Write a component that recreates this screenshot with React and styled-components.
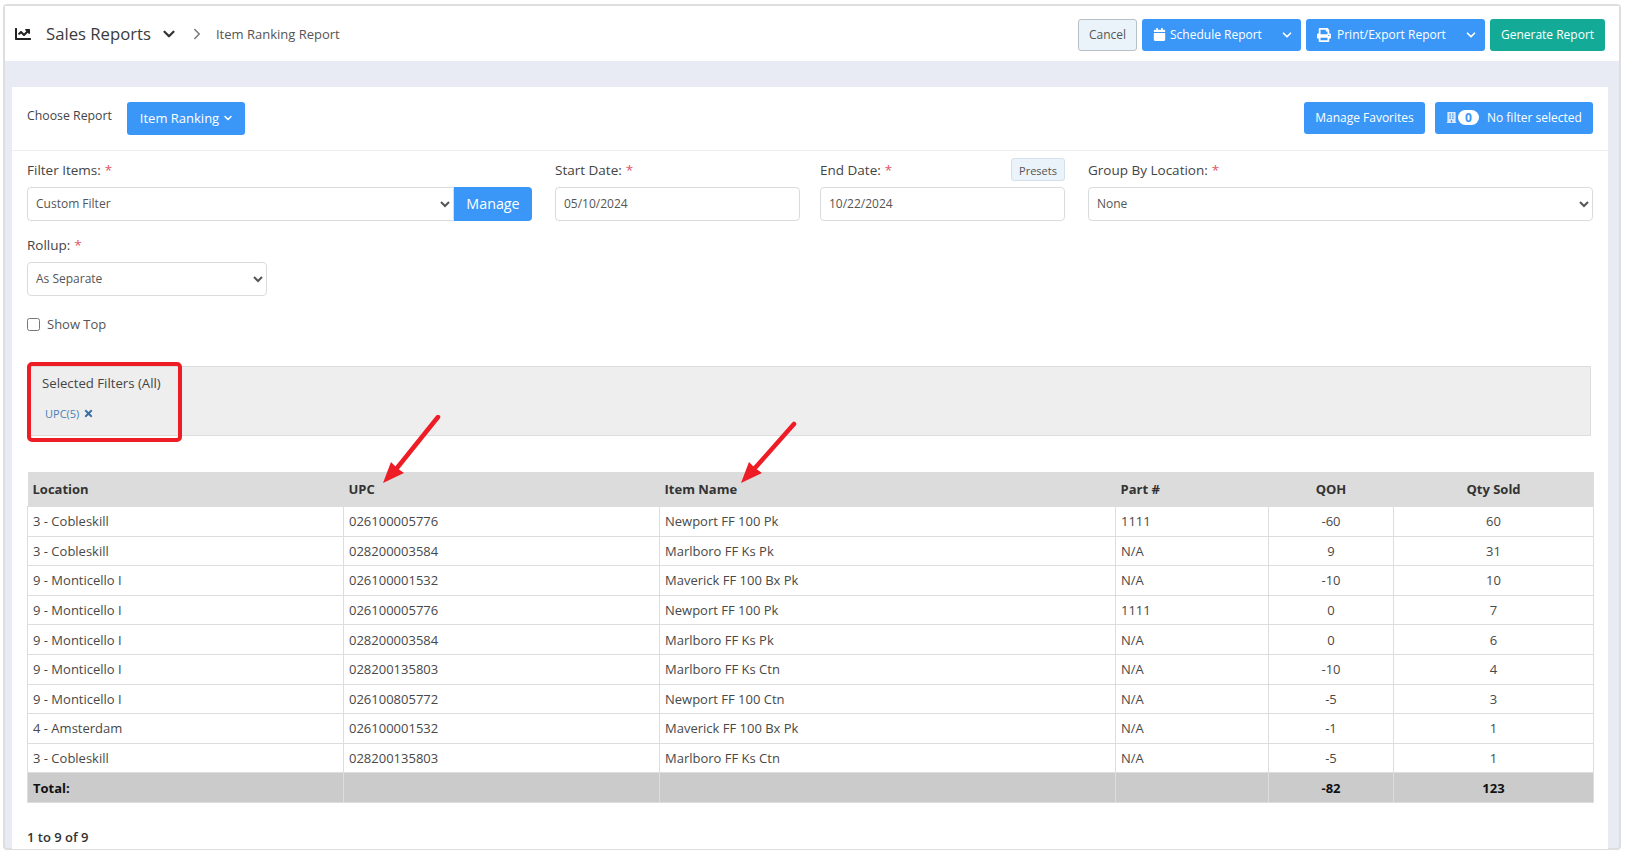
import React from 'react';
import styled, { createGlobalStyle } from 'styled-components';
import { FaBuilding, FaCalendar, FaChartLine, FaPrint, FaTimes } from 'react-icons/fa';
import { FiChevronDown, FiChevronRight } from 'react-icons/fi';

const rows = [
  ['3 - Cobleskill', '026100005776', 'Newport FF 100 Pk', '1111', '-60', '60'],
  ['3 - Cobleskill', '028200003584', 'Marlboro FF Ks Pk', 'N/A', '9', '31'],
  ['9 - Monticello I', '026100001532', 'Maverick FF 100 Bx Pk', 'N/A', '-10', '10'],
  ['9 - Monticello I', '026100005776', 'Newport FF 100 Pk', '1111', '0', '7'],
  ['9 - Monticello I', '028200003584', 'Marlboro FF Ks Pk', 'N/A', '0', '6'],
  ['9 - Monticello I', '028200135803', 'Marlboro FF Ks Ctn', 'N/A', '-10', '4'],
  ['9 - Monticello I', '026100805772', 'Newport FF 100 Ctn', 'N/A', '-5', '3'],
  ['4 - Amsterdam', '026100001532', 'Maverick FF 100 Bx Pk', 'N/A', '-1', '1'],
  ['3 - Cobleskill', '028200135803', 'Marlboro FF Ks Ctn', 'N/A', '-5', '1'],
];

const GlobalStyle = createGlobalStyle`
  html, body {
    margin: 0;
    background: #fff;
    font-family: "Open Sans", "Noto Sans", sans-serif;
    font-size: 13px;
    color: #444;
  }
`;

const Frame = styled.div`
  box-sizing: border-box;
  width: 1618px;
  height: 846px;
  margin: 4px 0 0 3px;
  border: 2px solid #dedede;
  border-radius: 4px;
  background: #e8ebf3;
`;

const Header = styled.header`
  height: 55px;
  display: flex;
  align-items: center;
  background: #fff;
  padding: 0 14px 0 10px;
`;

const Title = styled.h1`
  display: flex;
  align-items: center;
  margin: 0;
  font-size: 16.7px;
  font-weight: 400;
  color: #3b3b3b;
  svg { flex: none; }
`;

const TitleText = styled.span`
  margin: 0 9px 0 15px;
`;

const Crumb = styled.span`
  margin-left: 10px;
  font-size: 13px;
  color: #555;
`;

const Button = styled.button`
  box-sizing: border-box;
  display: inline-flex;
  align-items: center;
  justify-content: center;
  height: ${p => p.$h || 32}px;
  width: ${p => (p.$w ? `${p.$w}px` : 'auto')};
  padding: 0 0 2px;
  border: 0;
  border-radius: 3px;
  background: #3a97f8;
  color: #fff;
  font: 400 12px "Open Sans", "Noto Sans", sans-serif;
  svg { flex: none; }
`;

const Actions = styled.div`
  margin: 2px 0 0 auto;
  display: flex;
  gap: 5px;
  ${Button} { padding-bottom: 0; }
`;

const IconButton = styled(Button)`
  justify-content: flex-start;
  padding-left: 11px;
`;

const ReportButton = styled(Button)`
  padding-left: 2px;
  font-size: 13px;
`;

const CancelButton = styled(Button)`
  background: #ebf3fa;
  border: 1px solid #b9c0c7;
  color: #555;
`;

const TealButton = styled(Button)`
  background: #13ab98;
`;

const ButtonLabel = styled.span`
  margin: 0 18px 0 ${p => p.$left}px;
`;

const Card = styled.main`
  box-sizing: border-box;
  width: 1596px;
  height: 762px;
  margin: 26px 0 0 7px;
  padding-top: 15px;
  background: #fff;
`;

const ReportBar = styled.div`
  display: flex;
  align-items: flex-start;
  height: 48px;
  padding: 0 15px;
  border-bottom: 1px solid #eee;
`;

const BarLabel = styled.span`
  width: 85px;
  margin: 5px 15px 0 0;
  font-size: 12.3px;
  font-weight: 500;
  color: #444;
  white-space: nowrap;
`;

const BarRight = styled.div`
  margin-left: auto;
  display: flex;
  gap: 10px;
`;

const Badge = styled.span`
  display: inline-block;
  width: 21px;
  height: 15px;
  line-height: 15px;
  margin: 0 8px 0 1px;
  border-radius: 8px;
  background: #fff;
  color: #3a97f8;
  font-size: 12px;
  font-weight: 700;
  text-align: center;
`;

const FormRow = styled.div`
  display: flex;
  padding: 0 15px;
  margin-top: ${p => p.$top}px;
`;

const Field = styled.div`
  position: relative;
  width: ${p => p.$w}px;
  margin-right: ${p => p.$mr || 0}px;
`;

const Label = styled.label`
  display: block;
  height: 20px;
  line-height: 20px;
  margin-bottom: 7px;
  font-size: 13.5px;
  font-weight: 500;
  color: #444;
`;

const Required = styled.span`
  color: #df5468;
  margin-left: 4px;
`;

const controlStyle = `
  box-sizing: border-box;
  width: 100%;
  height: 34px;
  border: 1px solid #d9dcdf;
  border-radius: 4px;
  background-color: #fff;
  color: #555;
  font: 400 12px "Open Sans", "Noto Sans", sans-serif;
  outline: none;
`;

const Select = styled.select`
  ${controlStyle}
  padding: 0 4px 1px;
`;

const Input = styled.input`
  ${controlStyle}
  padding: 0 8px 2px;
`;

const InputGroup = styled.div`
  display: flex;
  ${Select} { flex: 1; border-radius: 4px 0 0 4px; }
`;

const ManageButton = styled(Button)`
  width: 78px;
  height: 34px;
  border-radius: 0 4px 4px 0;
  font-size: 14.3px;
`;

const PresetsButton = styled(CancelButton)`
  position: absolute;
  top: -2px;
  right: 0;
  width: 54px;
  height: 23px;
  padding: 1px 0 0;
  font-size: 11px;
  border-color: #d5e0ea;
`;

const CheckRow = styled.label`
  display: flex;
  align-items: center;
  gap: 7px;
  margin: 19px 0 0 15px;
  height: 18px;
  color: #555;
`;

const Check = styled.input`
  margin: 0;
  width: 13px;
  height: 13px;
`;

const FilterPanel = styled.section`
  position: relative;
  box-sizing: border-box;
  width: 1564px;
  height: 70px;
  margin: 33px 0 0 15px;
  padding: 6px 15px;
  background: #eee;
  border: 1px solid #ddd;
  border-left: 0;
`;

const FilterTitle = styled.div`
  height: 20px;
  line-height: 20px;
  font-size: 13.2px;
  color: #444;
`;

const FilterTag = styled.div`
  display: flex;
  align-items: center;
  gap: 4px;
  margin: 13px 0 0 3px;
  font-size: 11px;
  color: #4a7fb5;
  svg { color: #386ea6; }
`;

const Highlight = styled.div`
  position: absolute;
  top: -5px;
  left: 0;
  box-sizing: border-box;
  width: 155px;
  height: 80px;
  border: 4px solid #ee1c25;
  border-radius: 5px;
`;

const TableWrap = styled.div`
  position: relative;
  margin: 36px 15px 0;
`;

const Table = styled.table`
  width: 1566px;
  table-layout: fixed;
  border-collapse: collapse;
  font-size: 13px;
  color: #484848;
`;

const HeadCell = styled.th`
  height: 34px;
  padding: 0 5px;
  background: #dcdcdc;
  color: #333;
  font-weight: 700;
  text-align: ${p => (p.$center ? 'center' : 'left')};
`;

const Cell = styled.td`
  height: 28.6px;
  padding: 0 5px;
  border: 1px solid #ddd;
  text-align: ${p => (p.$center ? 'center' : 'left')};
`;

const TotalCell = styled(Cell)`
  background: #cbcbcb;
  color: #111;
  font-weight: 700;
`;

const ArrowMark = styled.svg`
  position: absolute;
  top: -57px;
  left: ${p => p.$left}px;
  pointer-events: none;
`;

const Footer = styled.div`
  margin: 25px 0 0 15px;
  font-weight: 600;
  color: #333;
`;

function Arrow({ left, tail }) {
  return (
    <ArrowMark $left={left} width="60" height="72" viewBox="0 0 60 72">
      <line x1="16" y1="53" x2={tail[0]} y2={tail[1]} stroke="#ee1c25" strokeWidth="4.5" strokeLinecap="round" />
      <polygon points="2,68 10,47 16,53 23,58" fill="#ee1c25" />
    </ArrowMark>
  );
}

export default function App() {
  return (
    <>
      <GlobalStyle />
      <Frame>
        <Header>
          <Title>
            <FaChartLine size={16} color="#222" />
            <TitleText>Sales Reports</TitleText>
            <FiChevronDown size={18} strokeWidth={3} color="#333" />
          </Title>
          <FiChevronRight size={18} color="#777" style={{ marginLeft: 10 }} />
          <Crumb>Item Ranking Report</Crumb>
          <Actions>
            <CancelButton $w={59}>Cancel</CancelButton>
            <IconButton $w={159}>
              <FaCalendar size={13} />
              <ButtonLabel $left={4}>Schedule Report</ButtonLabel>
              <FiChevronDown size={14} strokeWidth={3} />
            </IconButton>
            <IconButton $w={179}>
              <FaPrint size={14} />
              <ButtonLabel $left={6}>Print/Export Report</ButtonLabel>
              <FiChevronDown size={14} strokeWidth={3} />
            </IconButton>
            <TealButton $w={115}>Generate Report</TealButton>
          </Actions>
        </Header>
        <Card>
          <ReportBar>
            <BarLabel>Choose Report</BarLabel>
            <ReportButton $w={118} $h={33}>
              Item Ranking
              <FiChevronDown size={12} strokeWidth={3} style={{ marginLeft: 3 }} />
            </ReportButton>
            <BarRight>
              <Button $w={121}>Manage Favorites</Button>
              <IconButton $w={158}>
                <FaBuilding size={11} color="#dbe9fb" />
                <Badge>0</Badge>
                No filter selected
              </IconButton>
            </BarRight>
          </ReportBar>

          <FormRow $top={9}>
            <Field $w={505} $mr={23}>
              <Label>Filter Items:<Required>*</Required></Label>
              <InputGroup>
                <Select defaultValue="custom"><option value="custom">Custom Filter</option></Select>
                <ManageButton>Manage</ManageButton>
              </InputGroup>
            </Field>
            <Field $w={245} $mr={20}>
              <Label>Start Date:<Required>*</Required></Label>
              <Input defaultValue="05/10/2024" />
            </Field>
            <Field $w={245} $mr={23}>
              <Label>End Date:<Required>*</Required></Label>
              <PresetsButton>Presets</PresetsButton>
              <Input defaultValue="10/22/2024" />
            </Field>
            <Field $w={505}>
              <Label>Group By Location:<Required>*</Required></Label>
              <Select defaultValue="none"><option value="none">None</option></Select>
            </Field>
          </FormRow>

          <FormRow $top={14}>
            <Field $w={240}>
              <Label>Rollup:<Required>*</Required></Label>
              <Select defaultValue="sep"><option value="sep">As Separate</option></Select>
            </Field>
          </FormRow>

          <CheckRow><Check type="checkbox" />Show Top</CheckRow>

          <FilterPanel>
            <FilterTitle>Selected Filters (All)</FilterTitle>
            <FilterTag>UPC(5)<FaTimes size={11} /></FilterTag>
            <Highlight />
          </FilterPanel>

          <TableWrap>
            <Table>
              <colgroup>
                <col width="316" /><col width="316" /><col width="456" />
                <col width="153" /><col width="125" /><col width="200" />
              </colgroup>
              <thead>
                <tr>
                  <HeadCell>Location</HeadCell>
                  <HeadCell>UPC</HeadCell>
                  <HeadCell>Item Name</HeadCell>
                  <HeadCell>Part #</HeadCell>
                  <HeadCell $center>QOH</HeadCell>
                  <HeadCell $center>Qty Sold</HeadCell>
                </tr>
              </thead>
              <tbody>
                {rows.map((r, i) => (
                  <tr key={i}>
                    <Cell>{r[0]}</Cell>
                    <Cell>{r[1]}</Cell>
                    <Cell>{r[2]}</Cell>
                    <Cell>{r[3]}</Cell>
                    <Cell $center>{r[4]}</Cell>
                    <Cell $center>{r[5]}</Cell>
                  </tr>
                ))}
                <tr>
                  <TotalCell>Total:</TotalCell>
                  <TotalCell />
                  <TotalCell />
                  <TotalCell />
                  <TotalCell $center>-82</TotalCell>
                  <TotalCell $center>123</TotalCell>
                </tr>
              </tbody>
            </Table>
            <Arrow left={354} tail={[57, 2]} />
            <Arrow left={712} tail={[55, 9]} />
          </TableWrap>

          <Footer>1 to 9 of 9</Footer>
        </Card>
      </Frame>
    </>
  );
}
